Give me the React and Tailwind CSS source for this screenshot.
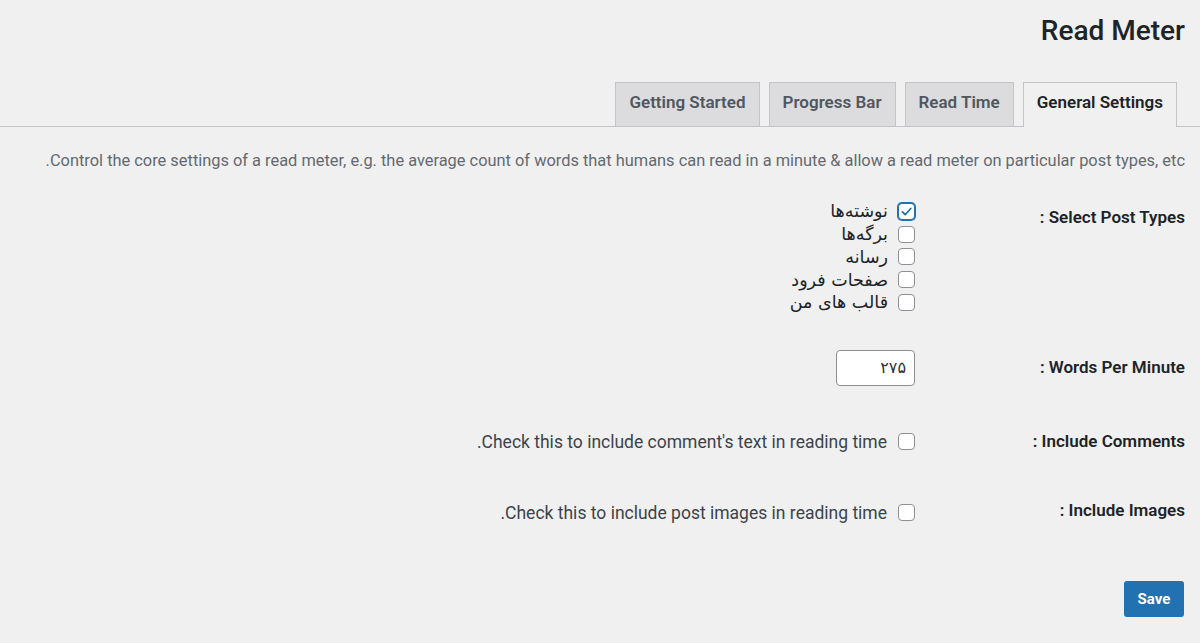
import React from 'react';

const TABS = ['General Settings', 'Read Time', 'Progress Bar', 'Getting Started'];

const POST_TYPES = [
  { label: 'نوشته‌ها', checked: true },
  { label: 'برگه‌ها', checked: false },
  { label: 'رسانه', checked: false },
  { label: 'صفحات فرود', checked: false },
  { label: 'قالب های من', checked: false },
];

function Checkbox({ checked }) {
  return (
    <span
      className={
        'inline-flex h-[17px] w-[17px] shrink-0 items-center justify-center rounded-[4px] border bg-white ' +
        (checked ? 'border-[#2271b1] shadow-[0_0_0_1px_#2271b1]' : 'border-[#8c8f94]')
      }
    >
      {checked && (
        <svg viewBox="0 0 20 20" className="h-[15px] w-[15px]">
          <path d="M4.5 10.5l3.8 3.8 7.4-8.3" fill="none" stroke="#2271b1" strokeWidth="2.4" strokeLinecap="round" strokeLinejoin="round" />
        </svg>
      )}
    </span>
  );
}

function Row({ label, labelPad, fieldPad, children }) {
  return (
    <div className="flex items-start">
      <div className="w-[270px] shrink-0 text-[17px] font-semibold leading-[24px] text-[#1d2327]" style={{ paddingTop: labelPad }}>
        {label}
      </div>
      <div className="flex-1" style={{ paddingTop: fieldPad }}>
        {children}
      </div>
    </div>
  );
}

export default function App() {
  return (
    <div dir="rtl" className="min-h-screen bg-[#f0f0f1] pr-[15px] font-['Roboto',sans-serif] text-[#3c434a]">
      <h1 className="pt-[13px] text-[28px] font-medium leading-[36px] text-[#1d2327]">Read Meter</h1>

      {/* tabs */}
      <nav className="-mr-[15px] mt-[33px] flex gap-[9px] border-b border-[#c3c4c7] pr-[23px]">
        {TABS.map((t, i) => (
          <div
            key={t}
            className={
              'flex h-[44px] items-center border border-b-0 px-[13px] pb-[4px] text-[17px] font-semibold ' +
              (i === 0
                ? '-mb-px h-[45px] border-[#c3c4c7] bg-[#f0f0f1] text-[#1d2327]'
                : 'border-[#c3c4c7] bg-[#dcdcde] text-[#50575e]')
            }
          >
            {t}
          </div>
        ))}
      </nav>

      <p className="mt-[22px] text-[16.4px] leading-[24px] text-[#646970]">
        Control the core settings of a read meter, e.g. the average count of words that humans can read in a minute &amp; allow a read meter on particular post types, etc.
      </p>

      <div className="mt-[12px]">
        <Row label="Select Post Types :" labelPad={20} fieldPad={15}>
          <div className="flex flex-col">
            {POST_TYPES.map((p) => (
              <label key={p.label} className="flex h-[22.75px] items-center gap-[10px] font-['DejaVu_Sans',sans-serif] text-[17.5px] leading-[22px] text-[#1d2327]">
                <Checkbox checked={p.checked} />
                <span>{p.label}</span>
              </label>
            ))}
          </div>
        </Row>

        <Row label="Words Per Minute :" labelPad={41} fieldPad={36}>
          <div className="flex h-[36px] w-[79px] items-center rounded-[4px] border border-[#8c8f94] bg-white px-[8px] font-['DejaVu_Sans',sans-serif] text-[16px] text-[#2c3338]">
            ۲۷۵
          </div>
        </Row>

        <Row label="Include Comments :" labelPad={43} fieldPad={42}>
          <label className="flex items-center gap-[11px] text-[17.5px] leading-[24px]">
            <span className="mt-[4px]"><Checkbox /></span>
            <span>Check this to include comment's text in reading time.</span>
          </label>
        </Row>

        <Row label="Include Images :" labelPad={42} fieldPad={43}>
          <label className="flex items-center gap-[11px] text-[17.5px] leading-[24px]">
            <span className="mt-[4px]"><Checkbox /></span>
            <span>Check this to include post images in reading time.</span>
          </label>
        </Row>
      </div>

      <div className="-ml-px mt-[54px] flex pr-px">
        <button className="h-[36px] w-[60px] rounded-[3px] bg-[#2271b1] text-[15px] font-bold text-white">Save</button>
      </div>
    </div>
  );
}
